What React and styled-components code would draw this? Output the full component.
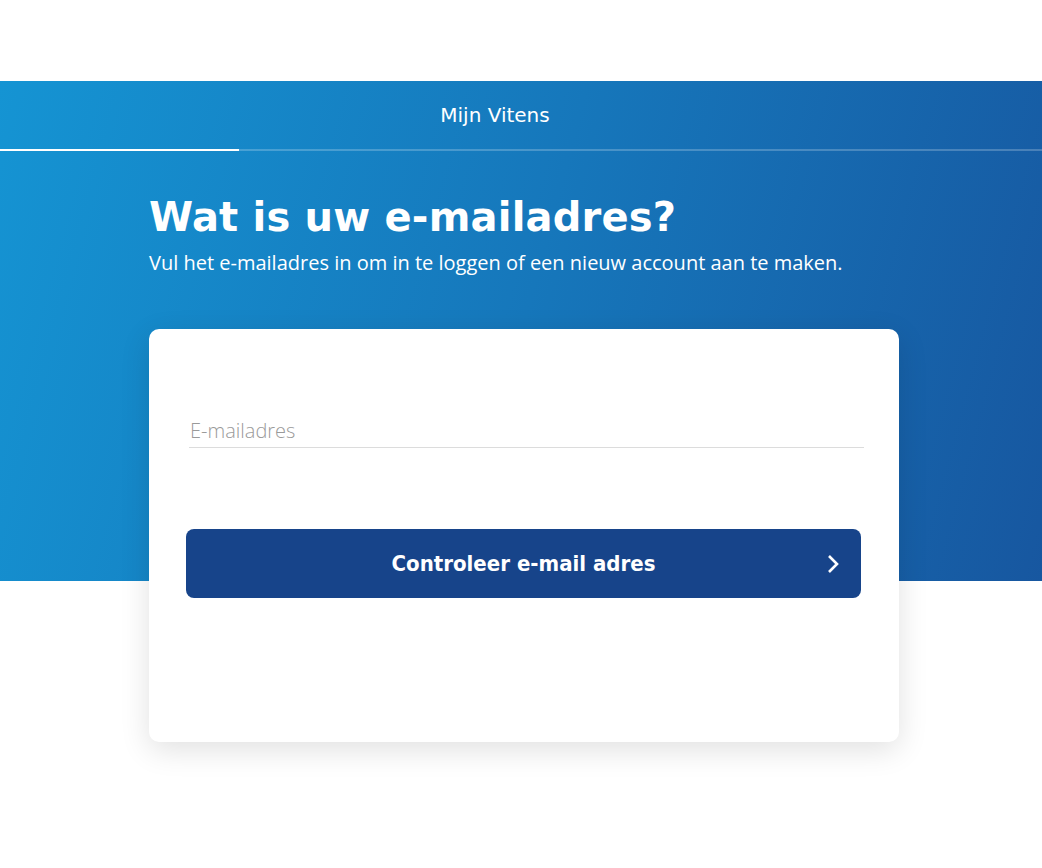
import styled, { createGlobalStyle } from "styled-components";

const GlobalStyle = createGlobalStyle`
    body { margin: 0; background: #fff; font-family: "Open Sans", sans-serif; }
    * { box-sizing: border-box; }
`;

const Page = styled.div`
    padding-top: 81px;
    min-height: 868px;
`;

const Hero = styled.section`
    height: 500px;
    background: linear-gradient(105deg, #1594d3 0%, #1677bb 50%, #1757a0 100%);
    color: #fff;
`;

const TopBar = styled.div`
    height: 68px;
    display: flex;
    align-items: center;
    justify-content: center;
    padding-right: 52px;
    font-family: "DejaVu Sans", Verdana, sans-serif;
    font-size: 20px;
`;

const Progress = styled.div`
    height: 2px;
    background: rgba(255, 255, 255, 0.22);
    display: flex;
`;

const ProgressFill = styled.div`
    height: 100%;
    background: #fff;
`;

const Content = styled.div`
    width: 750px;
    margin-left: 149px;
`;

const Title = styled.h1`
    margin: 42px 0 0;
    font-family: "DejaVu Sans", Verdana, sans-serif;
    font-weight: bold;
    font-size: 40px;
    line-height: 48px;
    letter-spacing: 0.2px;
`;

const Subtitle = styled.p`
    margin: 8px 0 0;
    font-size: 20px;
    line-height: 28px;
`;

const Card = styled.div`
    position: relative;
    margin-top: 52px;
    height: 413px;
    background: #fff;
    border-radius: 10px;
    box-shadow: 0 8px 30px rgba(0, 0, 0, 0.12);
    padding: 88px 35px 0 40px;
`;

const Field = styled.label`
    display: block;
    border-bottom: 1px solid #dcdcdc;
    padding-bottom: 2px;
`;

const Input = styled.input`
    width: 100%;
    border: 0;
    outline: none;
    padding: 0 0 0 1px;
    font-family: "Open Sans", sans-serif;
    font-weight: 300;
    font-size: 20px;
    line-height: 28px;
    color: #333;
    &::placeholder { color: #9a9a9a; }
`;

const Button = styled.button`
    position: relative;
    display: flex;
    align-items: center;
    justify-content: center;
    width: 675px;
    height: 69px;
    margin: 81px 0 0 -3px;
    border: 0;
    border-radius: 8px;
    background: #17448a;
    color: #fff;
    font-family: "DejaVu Sans Condensed", "DejaVu Sans", sans-serif;
    font-weight: bold;
    font-size: 22px;
    cursor: pointer;
`;

const Chevron = styled.svg`
    position: absolute;
    right: 21px;
    top: 50%;
    transform: translateY(-50%);
`;

export default function App(){
    return (
        <Page>
            <GlobalStyle />
            <Hero>
                <TopBar>Mijn Vitens</TopBar>
                <Progress>
                    <ProgressFill style={{ width: "239px" }} />
                </Progress>
                <Content>
                    <Title>Wat is uw e-mailadres?</Title>
                    <Subtitle>Vul het e-mailadres in om in te loggen of een nieuw account aan te maken.</Subtitle>
                    <Card>
                        <Field>
                            <Input type="email" placeholder="E-mailadres" />
                        </Field>
                        <Button>
                            Controleer e-mail adres
                            <Chevron width="14" height="20" viewBox="0 0 14 20">
                                <path d="M3 2 L11 10 L3 18" fill="none" stroke="#fff" strokeWidth="2.6" />
                            </Chevron>
                        </Button>
                    </Card>
                </Content>
            </Hero>
        </Page>
    )
}
